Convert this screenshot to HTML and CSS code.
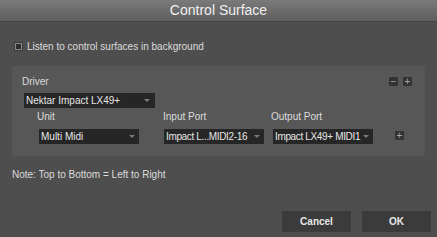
FILE: index.html
```html
<html>

<head>
    <link rel="stylesheet" href="styles.css">
</head>

<body>
    <div id="dialog">
        <div class="titlebar">Control Surface</div>
        <div class="content">
            <label class="check-row">
                <span class="checkbox"></span>
                Listen to control surfaces in background
            </label>

            <div class="panel">
                <div class="panel-head">
                    <span class="label">Driver</span>
                    <div class="tools">
                        <span class="tool">&minus;</span>
                        <span class="tool">+</span>
                    </div>
                </div>
                <div class="select driver">Nektar Impact LX49+<span class="arrow"></span></div>
                <div class="ports">
                    <div class="col unit">
                        <span class="label">Unit</span>
                        <div class="select">Multi Midi<span class="arrow"></span></div>
                    </div>
                    <div class="col input">
                        <span class="label">Input Port</span>
                        <div class="select tight">Impact L...MIDI2-16<span class="arrow"></span></div>
                    </div>
                    <div class="col">
                        <span class="label">Output Port</span>
                        <div class="select tight">Impact LX49+ MIDI1<span class="arrow"></span></div>
                    </div>
                    <span class="tool add">+</span>
                </div>
            </div>

            <div class="note">Note: Top to Bottom = Left to Right</div>
        </div>
        <div class="footer">
            <button class="btn">Cancel</button>
            <button class="btn">OK</button>
        </div>
    </div>
</body>

</html>
```

FILE: styles.css
```css
body {
    margin: 0;
    background: #4e4e4e;
    font-family: "Liberation Sans", Arial, sans-serif;
    color: #dcdcdc;
}

#dialog {
    width: 437px;
    height: 237px;
    display: flex;
    flex-direction: column;
}

.titlebar {
    height: 21px;
    line-height: 21px;
    text-align: center;
    font-size: 14px;
    color: #f0f0f0;
    background: linear-gradient(#7a7a7a, #5e5e5e);
    border-bottom: 1px solid #444;
}

.content {
    padding: 0 12px;
    flex: 1;
}

.check-row {
    display: flex;
    align-items: center;
    gap: 4px;
    margin-top: 18px;
    font-size: 10px;
    height: 12px;
}

.checkbox {
    width: 7px;
    height: 7px;
    margin-left: 2px;
    border: 1px solid #3a3a3a;
    background: #2c2c2c;
    box-shadow: inset 0 0 0 1px #8a8a8a;
}

.panel {
    margin-top: 14px;
    height: 90px;
    box-sizing: border-box;
    background: #575757;
    border-radius: 3px;
    padding: 8px 13px 0 10px;
}

.label {
    font-size: 10px;
}

.panel-head {
    display: flex;
    justify-content: space-between;
    align-items: center;
    height: 14px;
}

.tools {
    display: flex;
    gap: 5px;
}

.tool {
    width: 9px;
    height: 9px;
    background: #333;
    color: #aaa;
    font-size: 10px;
    line-height: 9px;
    text-align: center;
    border-radius: 1px;
}

.select {
    position: relative;
    width: 100px;
    height: 15px;
    line-height: 15px;
    box-sizing: border-box;
    padding-left: 2px;
    background: #262626;
    font-size: 10px;
    color: #e6e6e6;
    white-space: nowrap;
}

.tight {
    letter-spacing: -0.35px;
}

.arrow {
    position: absolute;
    right: 4px;
    top: 6px;
    border-left: 3.5px solid transparent;
    border-right: 3.5px solid transparent;
    border-top: 3px solid #7a7a7a;
}

.driver {
    width: 131px;
    margin-top: 5px;
    margin-left: 2px;
}

.driver .arrow {
    right: 5px;
}

.ports {
    display: flex;
    align-items: flex-end;
    margin-top: 3px;
    padding-left: 15px;
}

.col {
    display: flex;
    flex-direction: column;
    gap: 6px;
    width: 102px;
    margin-right: 6px;
}

.col .label {
    height: 12px;
    line-height: 12px;
}

.col .select {
    margin-left: 2px;
}

.unit {
    margin-right: 24px;
}

.input .select {
    margin-left: 1px;
}

.add {
    margin-left: 16px;
    margin-bottom: 4px;
}

.note {
    font-size: 10px;
    margin-top: 13px;
}

.footer {
    display: flex;
    justify-content: flex-end;
    gap: 11px;
    padding: 0 6px 5px 0;
}

.btn {
    width: 69px;
    height: 21px;
    background: #3b3b3b;
    border: none;
    color: #e8e8e8;
    font-family: "Liberation Sans", Arial, sans-serif;
    font-weight: bold;
    font-size: 10px;
}
```
